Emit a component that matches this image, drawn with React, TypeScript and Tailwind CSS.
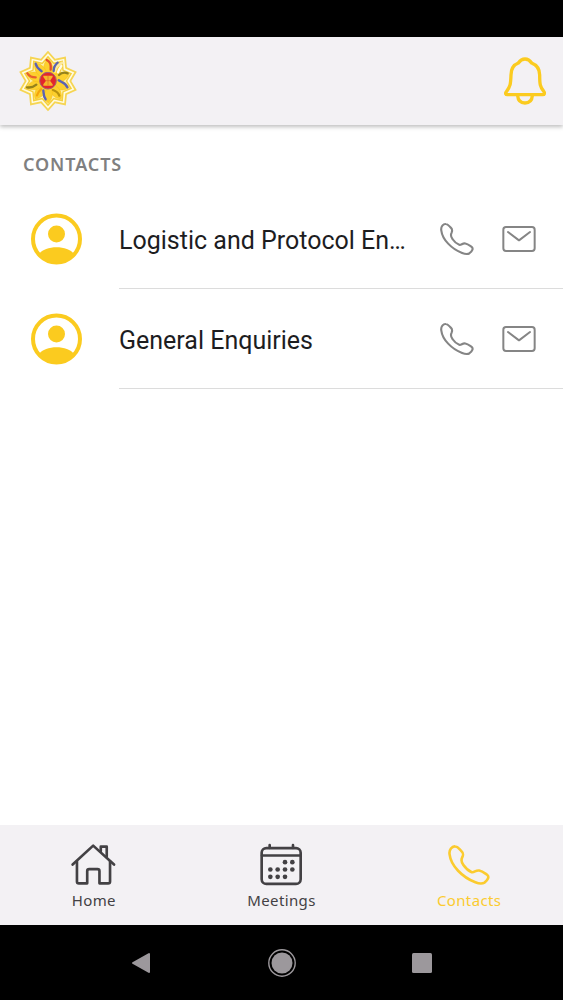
import React from 'react';

const YELLOW = '#fbcb1f';

function starPoints(outer: number, inner: number) {
  return Array.from({ length: 20 }, (_, i) => {
    const r = i % 2 === 0 ? outer : inner;
    const a = (i * Math.PI) / 10 - Math.PI / 2;
    return `${(117 + r * Math.cos(a)).toFixed(1)},${(124 + r * Math.sin(a)).toFixed(1)}`;
  }).join(' ');
}

const petalAngles = [0, 36, 72, 108, 144, 180, 216, 252, 288, 324];

const strokes = [
  { d: 'M113 61C124 66 127 76 125 90', color: '#e2502c' },
  { d: 'M80 72C83 84 92 90 98 95', color: '#5a62b4' },
  { d: 'M55 101C62 111 72 113 80 113', color: '#e8602c' },
  { d: 'M160 69C146 76 139 84 138 96', color: '#fbe9a0' },
  { d: 'M146 69C137 76 134 84 134 94', color: '#5a62b4' },
  { d: 'M157 79C152 86 149 91 147 98', color: '#fffbe8' },
  { d: 'M176 101C166 97 156 100 150 106', color: '#95821c' },
  { d: 'M149 122C158 128 170 130 175 143', color: '#5a62b4' },
  { d: 'M54 143C65 145 75 141 82 135', color: '#95821c' },
  { d: 'M103 152C104 160 103 170 110 179', color: '#5a62b4' },
  { d: 'M132 151C140 154 148 158 151 168', color: '#b9930f' },
  { d: 'M84 167C87 159 91 153 96 149', color: '#f3a40c' },
];

function Logo() {
  return (
    <svg viewBox="27 31 180 186" className="h-[62px] w-[60px]" aria-hidden="true">
      <polygon points={starPoints(91, 70)} fill="#f6d552" />
      <polygon points={starPoints(83, 64)} fill="#fffbe0" />
      <polygon points={starPoints(76, 58)} fill="#f5cf3c" />
      <polygon points={starPoints(69, 53)} fill="#fdf3b4" />
      {petalAngles.map((angle) => (
        <path key={angle} transform={`rotate(${angle} 117 124)`} d="M108 106C100 86 104 70 116 58C132 68 135 88 126 108Z" fill="#fcd02e" stroke="#f8bd14" strokeWidth="1.5" />
      ))}
      {strokes.map((s) => (
        <path key={s.d} d={s.d} fill="none" stroke={s.color} strokeWidth="7" strokeLinecap="round" />
      ))}
      <circle cx="117" cy="123" r="25" fill="#e3262b" stroke="#a0607a" strokeWidth="3" />
      <path d="M103 108H131V112L123 123L131 134V138H103V134L111 123L103 112Z" fill="#f5b52a" />
      <path d="M117 109V137M108 123H126" stroke="#e3602a" strokeWidth="2" />
    </svg>
  );
}

function BellIcon() {
  return (
    <svg viewBox="41 36 126 144" className="h-12 w-[42px]" fill="none" stroke={YELLOW} strokeWidth="10" strokeLinecap="round" strokeLinejoin="round" aria-hidden="true">
      <path d="M51 149H157C163 149 164 144 160 139C149 124 148 118 148 90C148 69 137 59 124 54C120 48 116 42 104 42C92 42 88 48 84 54C71 59 62 69 62 90C61 118 60 124 48 140C44 145 46 149 51 149Z" />
      <path d="M82 152C83 166 91 174 104 174C117 174 125 166 126 152" />
    </svg>
  );
}

function PhoneIcon({ className }: { className: string }) {
  return (
    <svg viewBox="84 69 129 126" className={className} fill="none" stroke="currentColor" strokeWidth="8" strokeLinejoin="round" aria-hidden="true">
      <path d="M89 100C86 85 97 74 106 75C114 75 118 82 124 88C132 95 132 99 128 108C123 117 125 124 132 133C140 145 149 151 157 154C165 156 169 147 180 149C190 151 198 158 204 162C212 168 206 179 196 186C188 191 178 189 168 185C128 170 93 134 89 100Z" />
    </svg>
  );
}

function MailIcon() {
  return (
    <svg viewBox="0 0 100 78" className="h-[26px] w-[34px]" fill="none" stroke="currentColor" strokeWidth="6" strokeLinecap="round" strokeLinejoin="round" aria-hidden="true">
      <rect x="3" y="3" width="94" height="72" rx="8" />
      <path d="M17 18L50 43L83 18" />
    </svg>
  );
}

function PersonIcon() {
  return (
    <svg viewBox="0 0 52 52" className="size-[52px] shrink-0" aria-hidden="true">
      <circle cx="26.5" cy="26" r="23.5" fill="#fff" stroke={YELLOW} strokeWidth="4" />
      <circle cx="26.5" cy="21" r="8.5" fill={YELLOW} />
      <path d="M9 41C15 32 38 32 44 41C35 53 18 53 9 41Z" fill={YELLOW} />
    </svg>
  );
}

function HomeIcon() {
  return (
    <svg viewBox="64 68 136 128" className="h-[43px] w-[45px]" fill="none" stroke="currentColor" strokeWidth="8" strokeLinecap="round" strokeLinejoin="round" aria-hidden="true">
      <path d="M69 132L131 75L194 132" />
      <path d="M82 123V183Q82 189 88 189H113V152Q113 146 119 146H144Q150 146 150 152V189H176Q182 189 182 183V123" />
      <path d="M154 92V78H172V108" />
    </svg>
  );
}

const dots = [
  [166, 125], [188, 125],
  [122, 147], [144, 147], [166, 147], [188, 147],
  [122, 169], [144, 169], [166, 169],
];

function CalendarIcon() {
  return (
    <svg viewBox="91 68 126 128" className="h-[43px] w-[42px]" fill="none" stroke="currentColor" strokeWidth="8" strokeLinecap="round" aria-hidden="true">
      <rect x="96" y="83" width="117" height="107" rx="14" />
      <path d="M97 105H213M120 74V82M190 74V82" />
      {dots.map(([x, y]) => (
        <circle key={`${x}-${y}`} cx={x} cy={y} r="7" fill="currentColor" stroke="none" />
      ))}
    </svg>
  );
}

const contacts = ['Logistic and Protocol Enquiries', 'General Enquiries'];

const tabs = [
  { label: 'Home', icon: <HomeIcon />, active: false },
  { label: 'Meetings', icon: <CalendarIcon />, active: false },
  { label: 'Contacts', icon: <PhoneIcon className="size-[42px]" />, active: true },
];

export default function App() {
  return (
    <div className="flex min-h-screen flex-col bg-white font-['Noto_Sans',sans-serif]">
      <div className="h-[37px] bg-black" />
      <header className="flex h-[88px] items-center justify-between bg-[#f3f1f4] pr-[17px] pl-[18px] shadow-[0_2px_4px_rgba(0,0,0,0.25)]">
        <Logo />
        <button type="button" aria-label="Notifications">
          <BellIcon />
        </button>
      </header>

      <main className="flex-1 pt-[26px]">
        <h1 className="px-[23px] text-[18px] leading-[26px] font-semibold tracking-wider text-[#808080]">CONTACTS</h1>
        <ul className="pt-3">
          {contacts.map((name) => (
            <li key={name} className="flex h-[100px] items-stretch pl-[30px]">
              <div className="flex w-[89px] shrink-0 items-center">
                <PersonIcon />
              </div>
              <div className="flex min-w-0 flex-1 items-center border-b border-[#dcdcdc] pr-[27px] text-[#858585]">
                <span className="min-w-0 flex-1 truncate pt-1 font-[Roboto,sans-serif] text-[25px] leading-8 text-[#1d1d1f]">{name}</span>
                <div className="flex shrink-0 items-center gap-7 pl-[34px]">
                  <button type="button" aria-label={`Call ${name}`}>
                    <PhoneIcon className="size-[34px]" />
                  </button>
                  <button type="button" aria-label={`Email ${name}`}>
                    <MailIcon />
                  </button>
                </div>
              </div>
            </li>
          ))}
        </ul>
      </main>

      <nav className="grid h-[100px] grid-cols-3 bg-[#f3f1f4]">
        {tabs.map((tab) => (
          <a
            key={tab.label}
            href={`#${tab.label.toLowerCase()}`}
            aria-current={tab.active ? 'page' : undefined}
            className={`flex flex-col items-center pt-[18px] ${tab.active ? 'text-[#fbcb2f]' : 'text-[#434144]'}`}
          >
            <span className="flex h-[43px] items-center">{tab.icon}</span>
            <span className="pt-[3px] text-[15px] leading-[22px] tracking-wide">{tab.label}</span>
          </a>
        ))}
      </nav>

      <div className="grid h-[75px] grid-cols-3 place-items-center bg-black px-[12.5%] text-[#9c989c]">
        <button type="button" aria-label="Back">
          <svg viewBox="0 0 20 22" className="h-[22px] w-5" fill="currentColor" stroke="currentColor" strokeWidth="2" strokeLinejoin="round" aria-hidden="true">
            <path d="M2 11L18 2V20Z" />
          </svg>
        </button>
        <button type="button" aria-label="Home screen">
          <svg viewBox="0 0 28 28" className="size-7" aria-hidden="true">
            <circle cx="14" cy="14" r="13.2" fill="none" stroke="currentColor" strokeWidth="1.4" />
            <circle cx="14" cy="14" r="10.5" fill="currentColor" />
          </svg>
        </button>
        <button type="button" aria-label="Recent apps">
          <svg viewBox="0 0 20 20" className="size-5" fill="currentColor" aria-hidden="true">
            <rect width="20" height="20" rx="1.5" />
          </svg>
        </button>
      </div>
    </div>
  );
}
